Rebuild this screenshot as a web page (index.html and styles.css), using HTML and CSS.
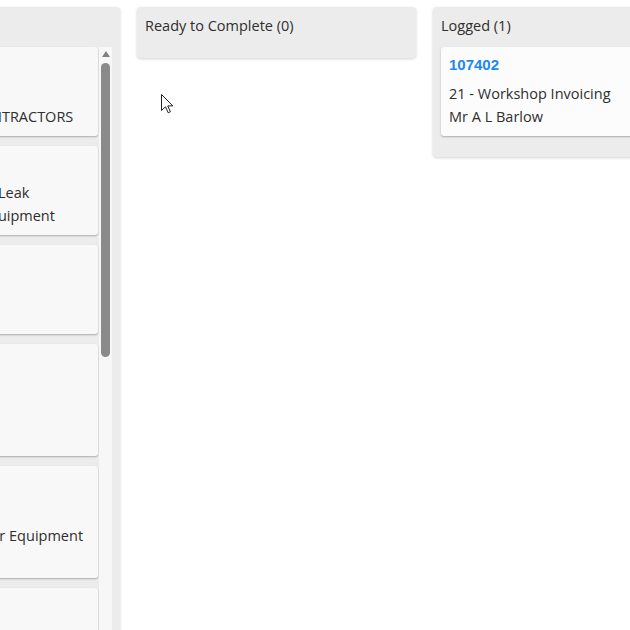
FILE: index.html
```html
<!DOCTYPE html>
<html lang="en">
<head>
<meta charset="utf-8">
<title>Job Board</title>
<link rel="stylesheet" href="styles.css">
</head>
<body>
<div class="board">
  <section class="column column-tall">
    <header class="column-title">In Progress (6)</header>
    <div class="column-body column-body-scroll">
      <div class="card-list">
        <div class="card">
          <div class="job-no">107355</div>
          <div class="line">7 - Subcontract</div>
          <div class="line">12 - PLANT SUB CONTRACTORS</div>
        </div>
        <div class="card">
          <div class="job-no">107361</div>
          <div class="line">14 - Hydraulic Valve Leak</div>
          <div class="line">Northern Plant &amp; Equipment</div>
        </div>
        <div class="card">
          <div class="job-no">107374</div>
          <div class="line">3 - Service</div>
          <div class="line">Mr J Hughes</div>
        </div>
        <div class="card">
          <div class="job-no">107380</div>
          <div class="line">9 - Breakdown</div>
          <div class="line">Mrs K Evans</div>
          <div class="line">Farm</div>
        </div>
        <div class="card">
          <div class="job-no">107391</div>
          <div class="line">5 - Repair</div>
          <div class="line">Wilsons Farm Tractor Equipment</div>
          <div class="line">Depot</div>
        </div>
        <div class="card">
          <div class="job-no">107398</div>
          <div class="line">2 - Inspection</div>
          <div class="line">Mr D Lloyd</div>
        </div>
      </div>
      <div class="scrollbar">
        <div class="scroll-arrow"></div>
        <div class="scroll-thumb"></div>
      </div>
    </div>
  </section>

  <section class="column">
    <header class="column-title">Ready to Complete (0)</header>
    <div class="column-body"></div>
  </section>

  <section class="column">
    <header class="column-title">Logged (1)</header>
    <div class="column-body">
      <div class="card card-light">
        <div class="job-no">107402</div>
        <div class="line">21 - Workshop Invoicing</div>
        <div class="line">Mr A L Barlow</div>
      </div>
    </div>
  </section>
</div>
<svg class="cursor" width="13" height="20" viewBox="0 0 13 20" aria-hidden="true">
  <path d="M0.5 0.5 L0.5 16.5 L4.5 12.8 L7.2 18.8 L9.4 17.8 L6.8 11.9 L11.8 11.9 Z" fill="#fff" stroke="#222" stroke-width="1" stroke-linejoin="miter"/>
</svg>
</body>
</html>
```
FILE: styles.css
```css
html, body {
  margin: 0;
  padding: 0;
  background: #ffffff;
  overflow: hidden;
  width: 630px;
  height: 630px;
}

body {
  font-family: "Open Sans", "Noto Sans", "DejaVu Sans", sans-serif;
  font-size: 14.5px;
  color: #2e2e2e;
  position: relative;
}

.board {
  display: flex;
  align-items: flex-start;
  gap: 17px;
  padding-top: 7px;
  margin-left: -154px;
  width: max-content;
}

.column {
  width: 279px;
  box-sizing: border-box;
  background: #ececec;
  border-radius: 4px;
  box-shadow: 0 1px 3px rgba(0, 0, 0, 0.18);
  padding: 0 8px 11px;
}

.column-tall {
  width: 274px;
  height: 660px;
  overflow: hidden;
}

.column-title {
  height: 40px;
  box-sizing: border-box;
  padding-top: 9px;
  line-height: 20px;
  white-space: nowrap;
}

.column-body-scroll {
  display: flex;
  gap: 1px;
}

.card-list {
  flex: 1;
  min-width: 0;
}

.card {
  background: #f8f8f8;
  border-radius: 3px;
  box-shadow: 0 1px 2px rgba(0, 0, 0, 0.28);
  padding: 7px 8px 8px;
  margin-bottom: 10px;
  white-space: nowrap;
  overflow: hidden;
}

.card-light {
  background: #fcfcfc;
}

.job-no {
  font-family: "Liberation Sans", Arial, sans-serif;
  font-weight: bold;
  font-size: 15px;
  line-height: 22px;
  height: 22px;
  color: #2188f2;
  margin-bottom: 6px;
}

.line {
  line-height: 23px;
  height: 23px;
}

.scrollbar {
  width: 13px;
  background: #f7f7f7;
  display: flex;
  flex-direction: column;
  align-items: center;
  height: 600px;
}

.scroll-arrow {
  margin-top: 4px;
  width: 0;
  height: 0;
  border-left: 4px solid transparent;
  border-right: 4px solid transparent;
  border-bottom: 6px solid #808080;
}

.scroll-thumb {
  margin-top: 6px;
  width: 9px;
  height: 294px;
  border-radius: 5px;
  background: #8a8a8a;
}

.cursor {
  position: absolute;
  left: 161px;
  top: 94px;
}
```
